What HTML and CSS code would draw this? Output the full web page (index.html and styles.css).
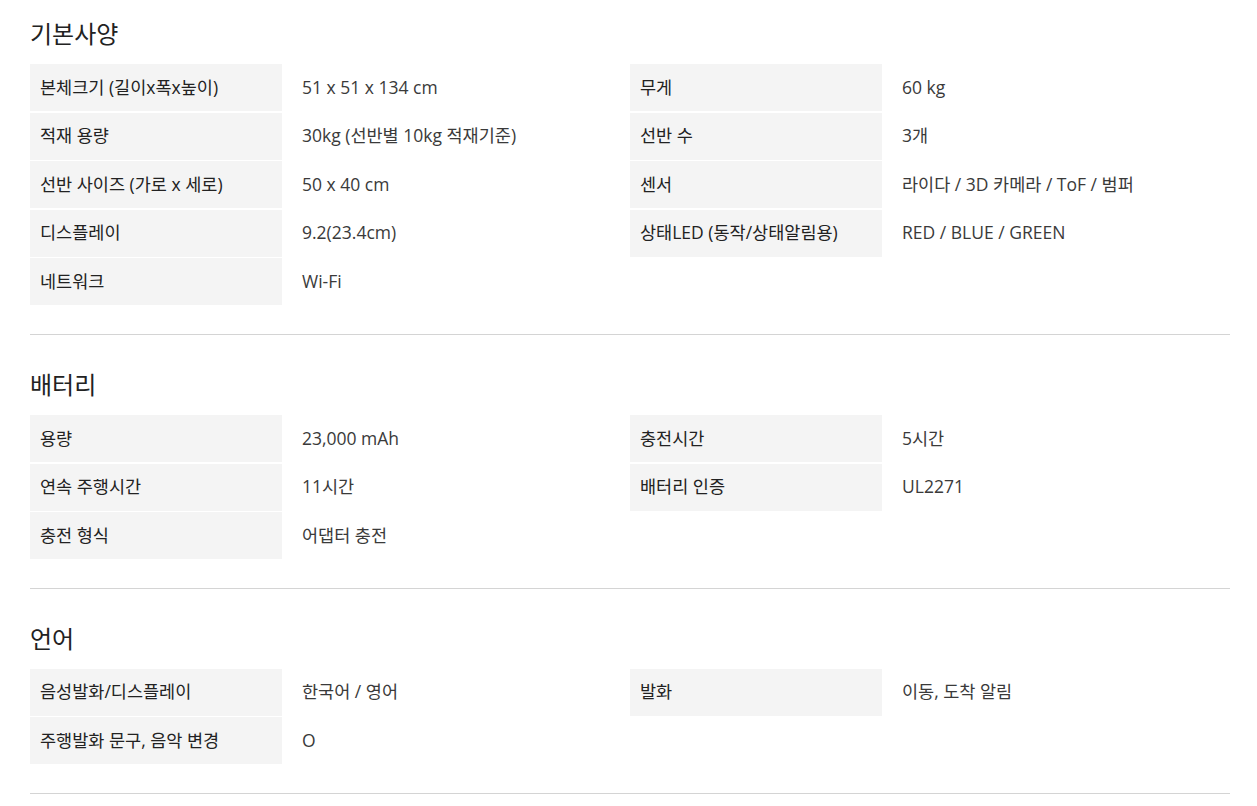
FILE: index.html
```html
<!DOCTYPE html>
<html lang="ko">
<head>
<meta charset="utf-8">
<title>스펙</title>
<link rel="stylesheet" href="styles.css">
</head>
<body>
<div class="spec">
  <section class="sec first">
    <h2 class="sec-title">기본사양</h2>
    <div class="grid">
      <div class="item"><div class="lbl">본체크기 (길이x폭x높이)</div><div class="val">51 x 51 x 134 cm</div></div>
      <div class="item"><div class="lbl">무게</div><div class="val">60 kg</div></div>
      <div class="item"><div class="lbl">적재 용량</div><div class="val">30kg (선반별 10kg 적재기준)</div></div>
      <div class="item"><div class="lbl">선반 수</div><div class="val">3개</div></div>
      <div class="item"><div class="lbl">선반 사이즈 (가로 x 세로)</div><div class="val">50 x 40 cm</div></div>
      <div class="item"><div class="lbl">센서</div><div class="val">라이다 / 3D 카메라 / ToF / 범퍼</div></div>
      <div class="item"><div class="lbl">디스플레이</div><div class="val">9.2(23.4cm)</div></div>
      <div class="item"><div class="lbl">상태LED (동작/상태알림용)</div><div class="val">RED / BLUE / GREEN</div></div>
      <div class="item"><div class="lbl">네트워크</div><div class="val">Wi-Fi</div></div>
    </div>
  </section>
  <section class="sec">
    <h2 class="sec-title">배터리</h2>
    <div class="grid">
      <div class="item"><div class="lbl">용량</div><div class="val">23,000 mAh</div></div>
      <div class="item"><div class="lbl">충전시간</div><div class="val">5시간</div></div>
      <div class="item"><div class="lbl">연속 주행시간</div><div class="val">11시간</div></div>
      <div class="item"><div class="lbl">배터리 인증</div><div class="val">UL2271</div></div>
      <div class="item"><div class="lbl">충전 형식</div><div class="val">어댑터 충전</div></div>
    </div>
  </section>
  <section class="sec">
    <h2 class="sec-title">언어</h2>
    <div class="grid">
      <div class="item"><div class="lbl">음성발화/디스플레이</div><div class="val">한국어 / 영어</div></div>
      <div class="item"><div class="lbl">발화</div><div class="val">이동, 도착 알림</div></div>
      <div class="item"><div class="lbl">주행발화 문구, 음악 변경</div><div class="val">O</div></div>
    </div>
  </section>
</div>
</body>
</html>
```
FILE: styles.css
```css
html, body {
  margin: 0;
  padding: 0;
  background: #fff;
}
body {
  font-family: "Open Sans", "Noto Sans CJK KR", sans-serif;
  color: #333;
}
.spec {
  width: 1200px;
  padding-left: 30px;
}
.sec {
  padding: 33px 0 28.5px;
  border-bottom: 1px solid #d4d4d4;
}
.sec.first {
  padding-top: 17px;
}
.sec-title {
  margin: 0 0 15px;
  font-family: "Noto Sans CJK KR", sans-serif;
  font-size: 24px;
  line-height: 32px;
  font-weight: 400;
  color: #222;
}
.grid {
  display: grid;
  grid-template-columns: 600px 600px;
  row-gap: 1.5px;
}
.item {
  display: flex;
  height: 47.1px;
  align-items: stretch;
}
.lbl {
  width: 252px;
  flex: none;
  box-sizing: border-box;
  padding: 0 0 2px 10px;
  background: #f4f4f4;
  display: flex;
  align-items: center;
  font-size: 17.5px;
  line-height: 22px;
  color: #222;
}
.val {
  padding: 0 0 2px 20px;
  display: flex;
  align-items: center;
  font-size: 17.5px;
  line-height: 22px;
  color: #3a3a3a;
}
```
